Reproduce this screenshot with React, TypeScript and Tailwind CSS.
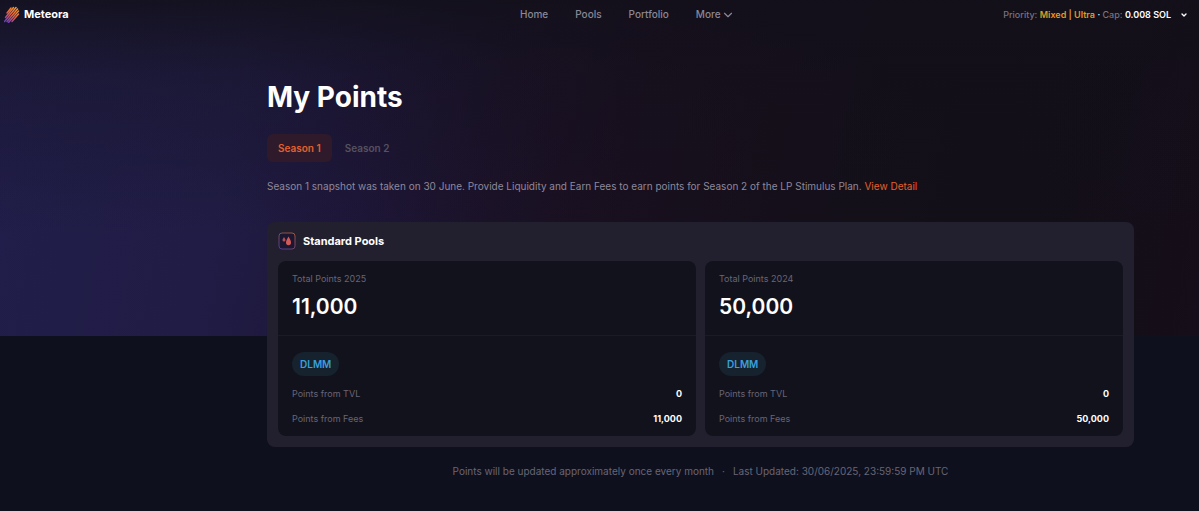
import { useState } from 'react';
import { ChevronDown } from 'lucide-react';

const seasons = ['Season 1', 'Season 2'];

const pools = [
    { year: 2025, total: '11,000', tvl: '0', fees: '11,000' },
    { year: 2024, total: '50,000', tvl: '0', fees: '50,000' },
];

function Logo() {
    return (
        <svg viewBox="0 0 32 34" className="w-4 h-[17px]" fill="none" strokeWidth="3" strokeLinecap="round" aria-hidden="true">
            <defs>
                <linearGradient id="meteor" x1="26" y1="2" x2="6" y2="32" gradientUnits="userSpaceOnUse">
                    <stop stopColor="#f7a02a" />
                    <stop offset="0.5" stopColor="#e8633f" />
                    <stop offset="1" stopColor="#6d3fc0" />
                </linearGradient>
            </defs>
            <g stroke="url(#meteor)">
                <path d="M6 14 L14 4" />
                <path d="M3 23 L19 3" />
                <path d="M1 31 L24 3" />
                <path d="M6 31 L27 6" />
                <path d="M9 33 L29 10" />
                <path d="M16 31 L29 16" />
            </g>
        </svg>
    );
}

function PoolIcon() {
    return (
        <svg viewBox="0 0 36 36" className="w-[18px] h-[18px]" aria-hidden="true">
            <defs>
                <linearGradient id="poolBorder" x1="30" y1="0" x2="8" y2="36" gradientUnits="userSpaceOnUse">
                    <stop stopColor="#a5563f" />
                    <stop offset="0.5" stopColor="#784566" />
                    <stop offset="1" stopColor="#4f3f8c" />
                </linearGradient>
            </defs>
            <rect x="2" y="2" width="32" height="32" rx="6" fill="#1c1730" stroke="url(#poolBorder)" strokeWidth="2" />
            <path d="M21 9 C23 13 26 17 26 21 A5 5.5 0 0 1 16 21 C16 17 19 13 21 9 Z" fill="#d25a58" />
            <path d="M12 10 C13 12 15 14 15 16 A3 3 0 0 1 9 16 C9 14 11 12 12 10 Z" fill="#b04e5a" />
        </svg>
    );
}

function Header() {
    return (
        <header className="grid grid-cols-[516px_1fr_auto] items-center h-[29px] pl-1 pr-[11px]">
            <a href="#" className="flex items-center gap-1 text-[11px] font-bold text-white">
                <Logo />
                Meteora
            </a>
            <nav className="flex items-center gap-[27px] text-[10px] font-medium text-[#8b8795]">
                <a href="#home">Home</a>
                <a href="#pools">Pools</a>
                <a href="#portfolio">Portfolio</a>
                <button type="button" className="flex items-center">
                    More
                    <ChevronDown className="w-[14px] h-[14px]" />
                </button>
            </nav>
            <button type="button" className="flex items-center text-[9px] font-medium text-[#777382]">
                <span>
                    Priority: <span className="font-semibold text-[#e09a26]">Mixed | Ultra</span>
                    <span className="text-white"> · </span>
                    Cap: <span className="font-semibold text-white">0.008 SOL</span>
                </span>
                <ChevronDown className="w-2 h-2 ml-[9px] text-white" strokeWidth={4} />
            </button>
        </header>
    );
}

function PoolCard({ pool }: { pool: (typeof pools)[number] }) {
    return (
        <article className="rounded-lg bg-[#12121c] text-[9px] leading-4 text-[#686576]">
            <div className="px-[14px] pt-[10px] h-[75px] border-b border-[#1b1a26]">
                <h3>Total Points {pool.year}</h3>
                <p className="mt-1 text-[21px] leading-8 font-semibold text-white">{pool.total}</p>
            </div>
            <div className="px-[14px] pt-4 pb-[9px]">
                <span className="flex w-fit items-center h-6 px-2 rounded-full bg-[#16222e] text-[10px] font-semibold text-[#3a9fdc]">
                    DLMM
                </span>
                <dl className="mt-[10px] flex flex-col gap-[9px]">
                    <div className="flex justify-between">
                        <dt>Points from TVL</dt>
                        <dd className="font-bold text-white">{pool.tvl}</dd>
                    </div>
                    <div className="flex justify-between">
                        <dt>Points from Fees</dt>
                        <dd className="font-bold text-white">{pool.fees}</dd>
                    </div>
                </dl>
            </div>
        </article>
    );
}

export default function App() {
    const [active, setActive] = useState('Season 1');

    return (
        <div className="min-h-screen bg-[#0e101e] bg-no-repeat bg-[length:100%_336px] bg-[image:linear-gradient(to_bottom,#12101ad9_0%,#12101a59_22%,#12101a00_70%),linear-gradient(100deg,#211e4b_0%,#201c45_20%,#1e173a_30%,#1b1228_42%,#190f1f_52%,#150f1a_68%,#120f18_85%,#160e1a_100%)] font-['Inter',sans-serif]">
            <Header />
            <main className="pl-[267px] pr-[65px] pt-[50px] pb-6">
                <h1 className="text-[28px] leading-9 font-bold text-white">My Points</h1>

                <div className="mt-[19px] flex gap-[2px] text-[10px] font-semibold">
                    {seasons.map((season) => (
                        <button
                            key={season}
                            type="button"
                            onClick={() => setActive(season)}
                            className={
                                active === season
                                    ? 'h-7 px-[11px] rounded-md bg-[#2e1a2b] text-[#e4602b]'
                                    : 'h-7 px-[11px] rounded-md text-[#565161]'
                            }
                        >
                            {season}
                        </button>
                    ))}
                </div>

                <p className="mt-4 text-[10px] leading-4 text-[#8d889b]">
                    Season 1 snapshot was taken on 30 June. Provide Liquidity and Earn Fees to earn points for Season 2 of
                    the LP Stimulus Plan.{' '}
                    <a href="#detail" className="text-[#e4602b]">
                        View Detail
                    </a>
                </p>

                <section className="mt-7 rounded-lg bg-[#22202e] px-[11px] pt-[10px] pb-[11px]">
                    <div className="flex items-center gap-[7px] h-[18px]">
                        <PoolIcon />
                        <h2 className="text-[11px] font-bold text-white">Standard Pools</h2>
                    </div>
                    <div className="mt-[11px] grid grid-cols-2 gap-[9px]">
                        {pools.map((pool) => (
                            <PoolCard key={pool.year} pool={pool} />
                        ))}
                    </div>
                </section>

                <footer className="mt-4 flex justify-center gap-2 text-[10px] leading-4 text-[#686576]">
                    <span>Points will be updated approximately once every month</span>
                    <span>·</span>
                    <span>Last Updated: 30/06/2025, 23:59:59 PM UTC</span>
                </footer>
            </main>
        </div>
    );
}
